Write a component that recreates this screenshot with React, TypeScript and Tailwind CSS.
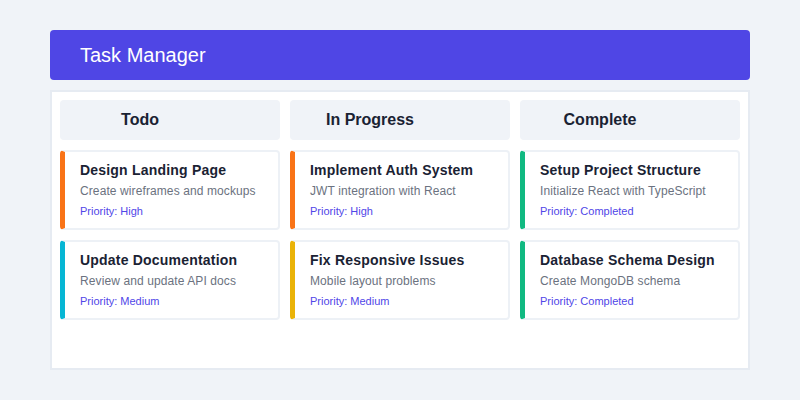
import React from "react";

type Task = {
  title: string;
  description: string;
  priority: string;
  accent: string;
};

type Column = {
  name: string;
  tasks: Task[];
};

const columns: Column[] = [
  {
    name: "Todo",
    tasks: [
      {
        title: "Design Landing Page",
        description: "Create wireframes and mockups",
        priority: "High",
        accent: "border-l-[#f97316]",
      },
      {
        title: "Update Documentation",
        description: "Review and update API docs",
        priority: "Medium",
        accent: "border-l-[#06b6d4]",
      },
    ],
  },
  {
    name: "In Progress",
    tasks: [
      {
        title: "Implement Auth System",
        description: "JWT integration with React",
        priority: "High",
        accent: "border-l-[#f97316]",
      },
      {
        title: "Fix Responsive Issues",
        description: "Mobile layout problems",
        priority: "Medium",
        accent: "border-l-[#eab308]",
      },
    ],
  },
  {
    name: "Complete",
    tasks: [
      {
        title: "Setup Project Structure",
        description: "Initialize React with TypeScript",
        priority: "Completed",
        accent: "border-l-[#10b981]",
      },
      {
        title: "Database Schema Design",
        description: "Create MongoDB schema",
        priority: "Completed",
        accent: "border-l-[#10b981]",
      },
    ],
  },
];

function TaskCard({ task }: { task: Task }) {
  return (
    <div
      className={`h-20 rounded-[4px] border-2 border-[#edf1f6] border-l-[5px] ${task.accent} bg-white pl-[15px] pt-[8px]`}
    >
      <div className="text-[14px] leading-5 font-bold tracking-[0.2px] text-[#1a2233]">{task.title}</div>
      <div className="mt-[3px] text-[12px] leading-4 tracking-[0.1px] text-[#6b7280]">{task.description}</div>
      <div className="mt-[4px] text-[11px] leading-4 text-[#5046e8]">Priority: {task.priority}</div>
    </div>
  );
}

export default function App() {
  return (
    <div
      className="h-[400px] w-[800px] bg-[#f0f3f8] px-[50px] pt-[30px]"
      style={{ fontFamily: '"Liberation Sans", Arial, sans-serif' }}
    >
      {/* Header */}
      <div className="flex h-[50px] items-center rounded-[4px] bg-[#4f46e5] pl-[30px]">
        <h1 className="text-[20px] font-normal text-white">Task Manager</h1>
      </div>

      {/* Board */}
      <div className="mt-[10px] h-[280px] border-2 border-[#e6ebf2] bg-white p-[8px]">
        <div className="grid grid-cols-3 gap-[10px]">
          {columns.map((col) => (
            <div key={col.name} className="flex flex-col gap-[10px]">
              <div className="flex h-10 items-center justify-center rounded-[4px] bg-[#f0f3f8] pr-[60px]">
                <span className="text-[16px] font-bold text-[#1a2233]">{col.name}</span>
              </div>
              {col.tasks.map((t) => (
                <TaskCard key={t.title} task={t} />
              ))}
            </div>
          ))}
        </div>
      </div>
    </div>
  );
}
